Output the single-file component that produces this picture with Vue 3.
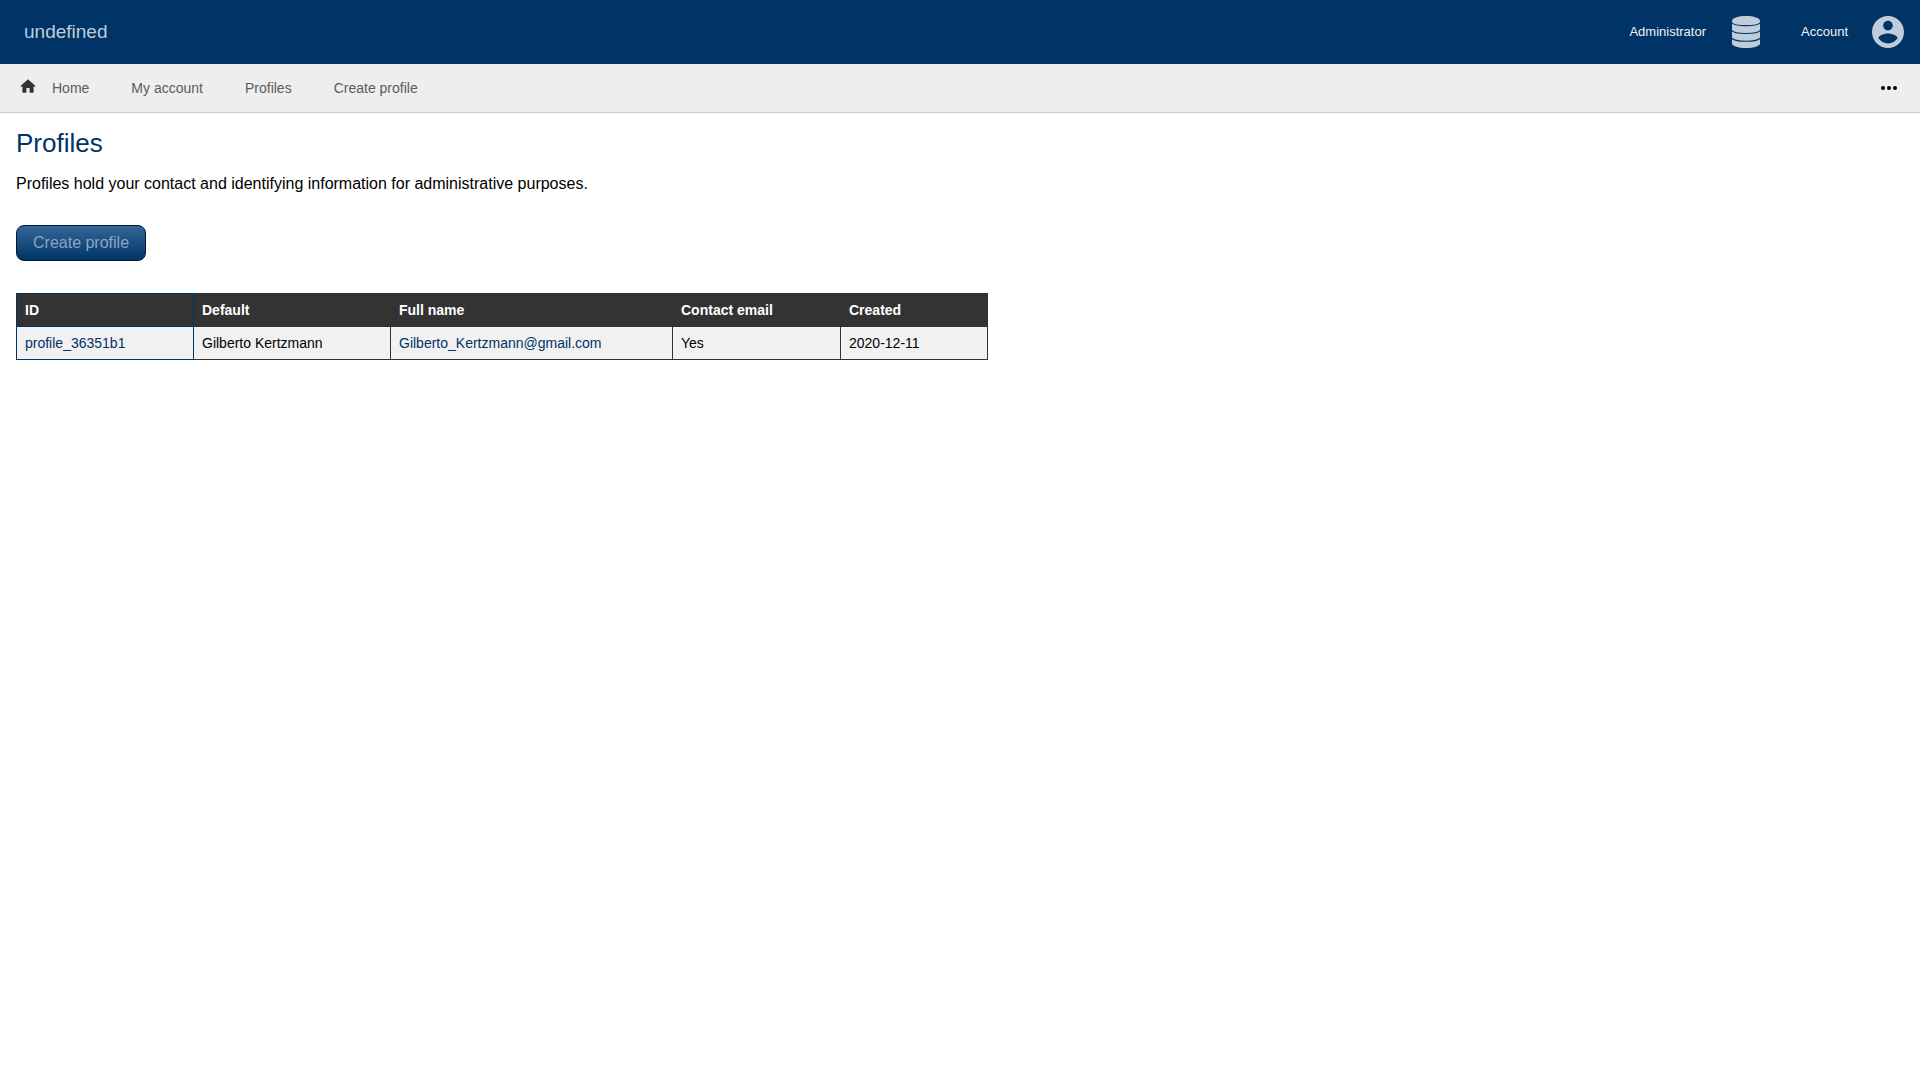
<script setup>
const links = ['Home', 'My account', 'Profiles', 'Create profile']
const columns = ['ID', 'Default', 'Full name', 'Contact email', 'Created']
const profiles = [
  {
    id: 'profile_36351b1',
    name: 'Gilberto Kertzmann',
    email: 'Gilberto_Kertzmann@gmail.com',
    contact: 'Yes',
    created: '2020-12-11',
  },
]
</script>

<template>
  <div class="page">
    <header class="topbar">
      <a class="brand" href="#">undefined</a>
      <div class="tools">
        <a class="tool" href="#">
          <span>Administrator</span>
          <svg class="tool-icon" viewBox="0 0 512 512" aria-hidden="true">
            <path d="M32 76C32 34 132 0 256 0S480 34 480 76V440C480 480 380 512 256 512S32 480 32 440Z" />
            <path class="groove" d="M24 104C70 170 442 170 488 104M24 228C70 298 442 298 488 228M24 350C70 422 442 422 488 350" />
          </svg>
        </a>
        <a class="tool" href="#">
          <span>Account</span>
          <svg class="tool-icon" viewBox="2 2 20 20" aria-hidden="true">
            <path d="M12 2C6.48 2 2 6.48 2 12s4.48 10 10 10 10-4.480 10-10S17.520 2 12 2zm0 3c1.660 0 3 1.340 3 3s-1.340 3-3 3-3-1.340-3-3 1.340-3 3-3zm0 14.200c-2.500 0-4.710-1.280-6-3.220.030-1.990 4-3.080 6-3.080 1.990 0 5.970 1.090 6 3.080-1.290 1.940-3.500 3.220-6 3.220z" />
          </svg>
        </a>
      </div>
    </header>

    <nav class="menu">
      <svg class="home-icon" viewBox="2 3 20 17" aria-hidden="true">
        <path d="M10 20v-6h4v6h5v-8h3L12 3 2 12h3v8z" />
      </svg>
      <ul class="links">
        <li v-for="link in links" :key="link"><a href="#">{{ link }}</a></li>
      </ul>
      <button class="more" type="button" aria-label="More">
        <svg viewBox="0 0 24 24" aria-hidden="true">
          <circle cx="6" cy="12" r="2" />
          <circle cx="12" cy="12" r="2" />
          <circle cx="18" cy="12" r="2" />
        </svg>
      </button>
    </nav>

    <main class="content">
      <h1>Profiles</h1>
      <p>Profiles hold your contact and identifying information for administrative purposes.</p>
      <button class="create" type="button">Create profile</button>
      <table>
        <colgroup>
          <col class="col-id" />
          <col class="col-default" />
          <col class="col-name" />
          <col class="col-email" />
          <col class="col-created" />
        </colgroup>
        <thead>
          <tr>
            <th v-for="column in columns" :key="column" scope="col">{{ column }}</th>
          </tr>
        </thead>
        <tbody>
          <tr v-for="profile in profiles" :key="profile.id">
            <td><a href="#">{{ profile.id }}</a></td>
            <td>{{ profile.name }}</td>
            <td><a href="#">{{ profile.email }}</a></td>
            <td>{{ profile.contact }}</td>
            <td>{{ profile.created }}</td>
          </tr>
        </tbody>
      </table>
    </main>
  </div>
</template>

<style>
body {
  margin: 0;
  background: #fff;
}
</style>

<style scoped>
.page {
  font-family: "Liberation Sans", Arial, sans-serif;
  font-size: 16px;
  line-height: 18px;
  color: #000;
}

a {
  color: #036;
  text-decoration: none;
}

.topbar {
  display: flex;
  align-items: center;
  justify-content: space-between;
  height: 64px;
  padding: 0 16px 0 24px;
  background: #036;
}

.brand {
  font-size: 19px;
  color: #bfccd9;
}

.tools {
  display: flex;
  gap: 39px;
}

.tool {
  display: flex;
  align-items: center;
  gap: 24px;
  font-size: 13px;
  color: #f0f3f6;
}

.tool-icon {
  width: 32px;
  height: 32px;
  fill: #bfccd9;
}

.groove {
  fill: none;
  stroke: #036;
  stroke-width: 18;
}

.menu {
  display: flex;
  align-items: center;
  height: 48px;
  padding: 0 19px 0 20px;
  border-bottom: 1px solid #ccc;
  background: #eee;
}

.home-icon {
  width: 16px;
  height: 14px;
  margin-bottom: 4px;
  fill: #333;
}

.links {
  display: flex;
  gap: 42px;
  margin: 0 auto 0 16px;
  padding: 0;
  list-style: none;
  font-size: 14px;
}

.links a {
  color: #5c5c5c;
}

.more {
  display: flex;
  padding: 0;
  border: 0;
  background: none;
}

.more svg {
  width: 24px;
  height: 24px;
}

.content {
  padding: 15px 16px;
}

h1 {
  margin: 0;
  font-size: 26px;
  font-weight: 400;
  line-height: 30px;
  color: #036;
}

p {
  margin: 17px 0 32px;
}

.create {
  display: block;
  height: 36px;
  padding: 0 16px;
  border: 1px solid #001a33;
  border-radius: 8px;
  background: linear-gradient(#369, #036);
  font: inherit;
  color: #8ca6c0;
}

table {
  margin-top: 32px;
  table-layout: fixed;
  width: 100%;
  max-width: 972px;
  border-collapse: collapse;
  font-size: 14px;
  line-height: 16px;
}

.col-id {
  width: 177px;
}

.col-default {
  width: 197px;
}

.col-name {
  width: 282px;
}

.col-email {
  width: 168px;
}

.col-created {
  width: 147px;
}

th,
td {
  padding: 8px;
  border: 1px solid #333;
  text-align: left;
}

th {
  background: #333;
  color: #fff;
}

td {
  background: #f1f1f1;
}

th:first-child,
td:first-child {
  border-color: #036;
}
</style>
